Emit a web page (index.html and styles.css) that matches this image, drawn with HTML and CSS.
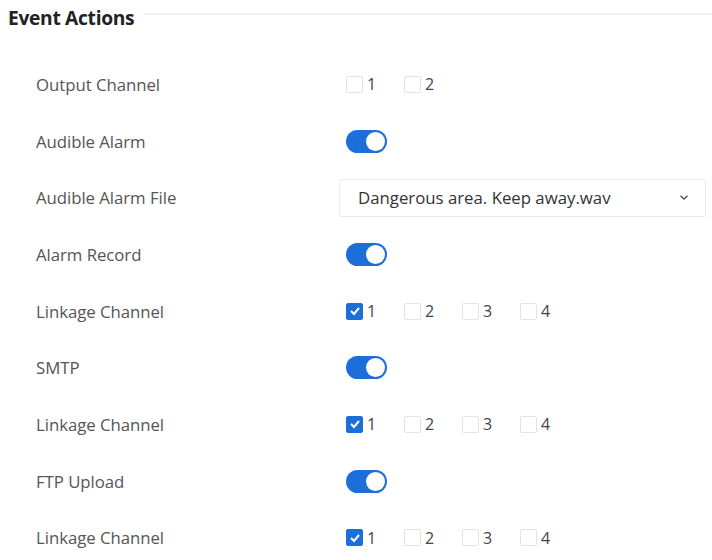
FILE: index.html
```html
<!DOCTYPE html>
<html>
<head>
<meta charset="utf-8">
<link rel="stylesheet" href="styles.css">
</head>
<body>
<div class="page">
  <div class="header">
    <h2 class="title">Event Actions</h2>
    <div class="rule"></div>
  </div>
  <div class="form">
    <div class="row">
      <div class="label">Output Channel</div>
      <div class="ctrl">
        <label class="cb"><span class="box"></span><span class="num">1</span></label>
        <label class="cb"><span class="box"></span><span class="num">2</span></label>
      </div>
    </div>
    <div class="row">
      <div class="label">Audible Alarm</div>
      <div class="ctrl"><span class="toggle"><span class="knob"></span></span></div>
    </div>
    <div class="row">
      <div class="label">Audible Alarm File</div>
      <div class="ctrl">
        <div class="select">
          <span class="sel-text">Dangerous area. Keep away.wav</span>
          <svg class="chev" width="10" height="7" viewBox="0 0 10 7"><path d="M1.5 1.8 L5 5 L8.5 1.8" fill="none" stroke="#555" stroke-width="1.5"/></svg>
        </div>
      </div>
    </div>
    <div class="row">
      <div class="label">Alarm Record</div>
      <div class="ctrl"><span class="toggle"><span class="knob"></span></span></div>
    </div>
    <div class="row">
      <div class="label">Linkage Channel</div>
      <div class="ctrl">
        <label class="cb"><span class="box on"><svg width="12" height="10" viewBox="0 0 12 10"><path d="M2 5 L5 8 L10 2" fill="none" stroke="#fff" stroke-width="2"/></svg></span><span class="num">1</span></label>
        <label class="cb"><span class="box"></span><span class="num">2</span></label>
        <label class="cb"><span class="box"></span><span class="num">3</span></label>
        <label class="cb"><span class="box"></span><span class="num">4</span></label>
      </div>
    </div>
    <div class="row">
      <div class="label">SMTP</div>
      <div class="ctrl"><span class="toggle"><span class="knob"></span></span></div>
    </div>
    <div class="row">
      <div class="label">Linkage Channel</div>
      <div class="ctrl">
        <label class="cb"><span class="box on"><svg width="12" height="10" viewBox="0 0 12 10"><path d="M2 5 L5 8 L10 2" fill="none" stroke="#fff" stroke-width="2"/></svg></span><span class="num">1</span></label>
        <label class="cb"><span class="box"></span><span class="num">2</span></label>
        <label class="cb"><span class="box"></span><span class="num">3</span></label>
        <label class="cb"><span class="box"></span><span class="num">4</span></label>
      </div>
    </div>
    <div class="row">
      <div class="label">FTP Upload</div>
      <div class="ctrl"><span class="toggle"><span class="knob"></span></span></div>
    </div>
    <div class="row">
      <div class="label">Linkage Channel</div>
      <div class="ctrl">
        <label class="cb"><span class="box on"><svg width="12" height="10" viewBox="0 0 12 10"><path d="M2 5 L5 8 L10 2" fill="none" stroke="#fff" stroke-width="2"/></svg></span><span class="num">1</span></label>
        <label class="cb"><span class="box"></span><span class="num">2</span></label>
        <label class="cb"><span class="box"></span><span class="num">3</span></label>
        <label class="cb"><span class="box"></span><span class="num">4</span></label>
      </div>
    </div>
  </div>
</div>
</body>
</html>
```
FILE: styles.css
```css
* { box-sizing: border-box; }
html, body { margin: 0; padding: 0; background: #fff; }
body { font-family: "Open Sans", "Noto Sans", sans-serif; color: #444; }
.page { width: 712px; height: 560px; overflow: hidden; }
.header { display: flex; align-items: center; height: 34px; padding-left: 8px; }
.title { margin: 0; font-size: 19.2px; font-weight: 700; color: #222; white-space: nowrap; letter-spacing: -0.3px; }
.rule { flex: 1; height: 2px; background: #f2f2f2; margin-left: 10px; margin-top: -6px; }
.form { padding-top: 22px; }
.row { display: flex; align-items: center; height: 56.7px; }
.label { width: 346px; padding-left: 36px; font-size: 16.8px; color: #555; letter-spacing: -0.05px; }
.ctrl { display: flex; align-items: center; }
.cb { display: flex; align-items: center; width: 58px; }
.box { width: 17px; height: 17px; border: 1px solid #e3e3e3; border-radius: 2px; display: flex; align-items: center; justify-content: center; background: #fff; }
.box.on { background: #1c6fd9; border-color: #1c6fd9; }
.num { margin-left: 4px; font-size: 16px; color: #444; }
.toggle { display: inline-block; position: relative; width: 41px; height: 23px; border-radius: 12px; background: #1c6fd9; }
.knob { position: absolute; right: 2px; top: 2px; width: 19px; height: 19px; border-radius: 50%; background: #fff; }
.select { display: flex; align-items: center; justify-content: space-between; width: 367px; height: 38px; margin-left: -7px; padding: 0 16px 0 18px; border: 1px solid #ebebeb; border-radius: 2px; font-size: 16.8px; color: #333; }
.chev { display: block; }
```
